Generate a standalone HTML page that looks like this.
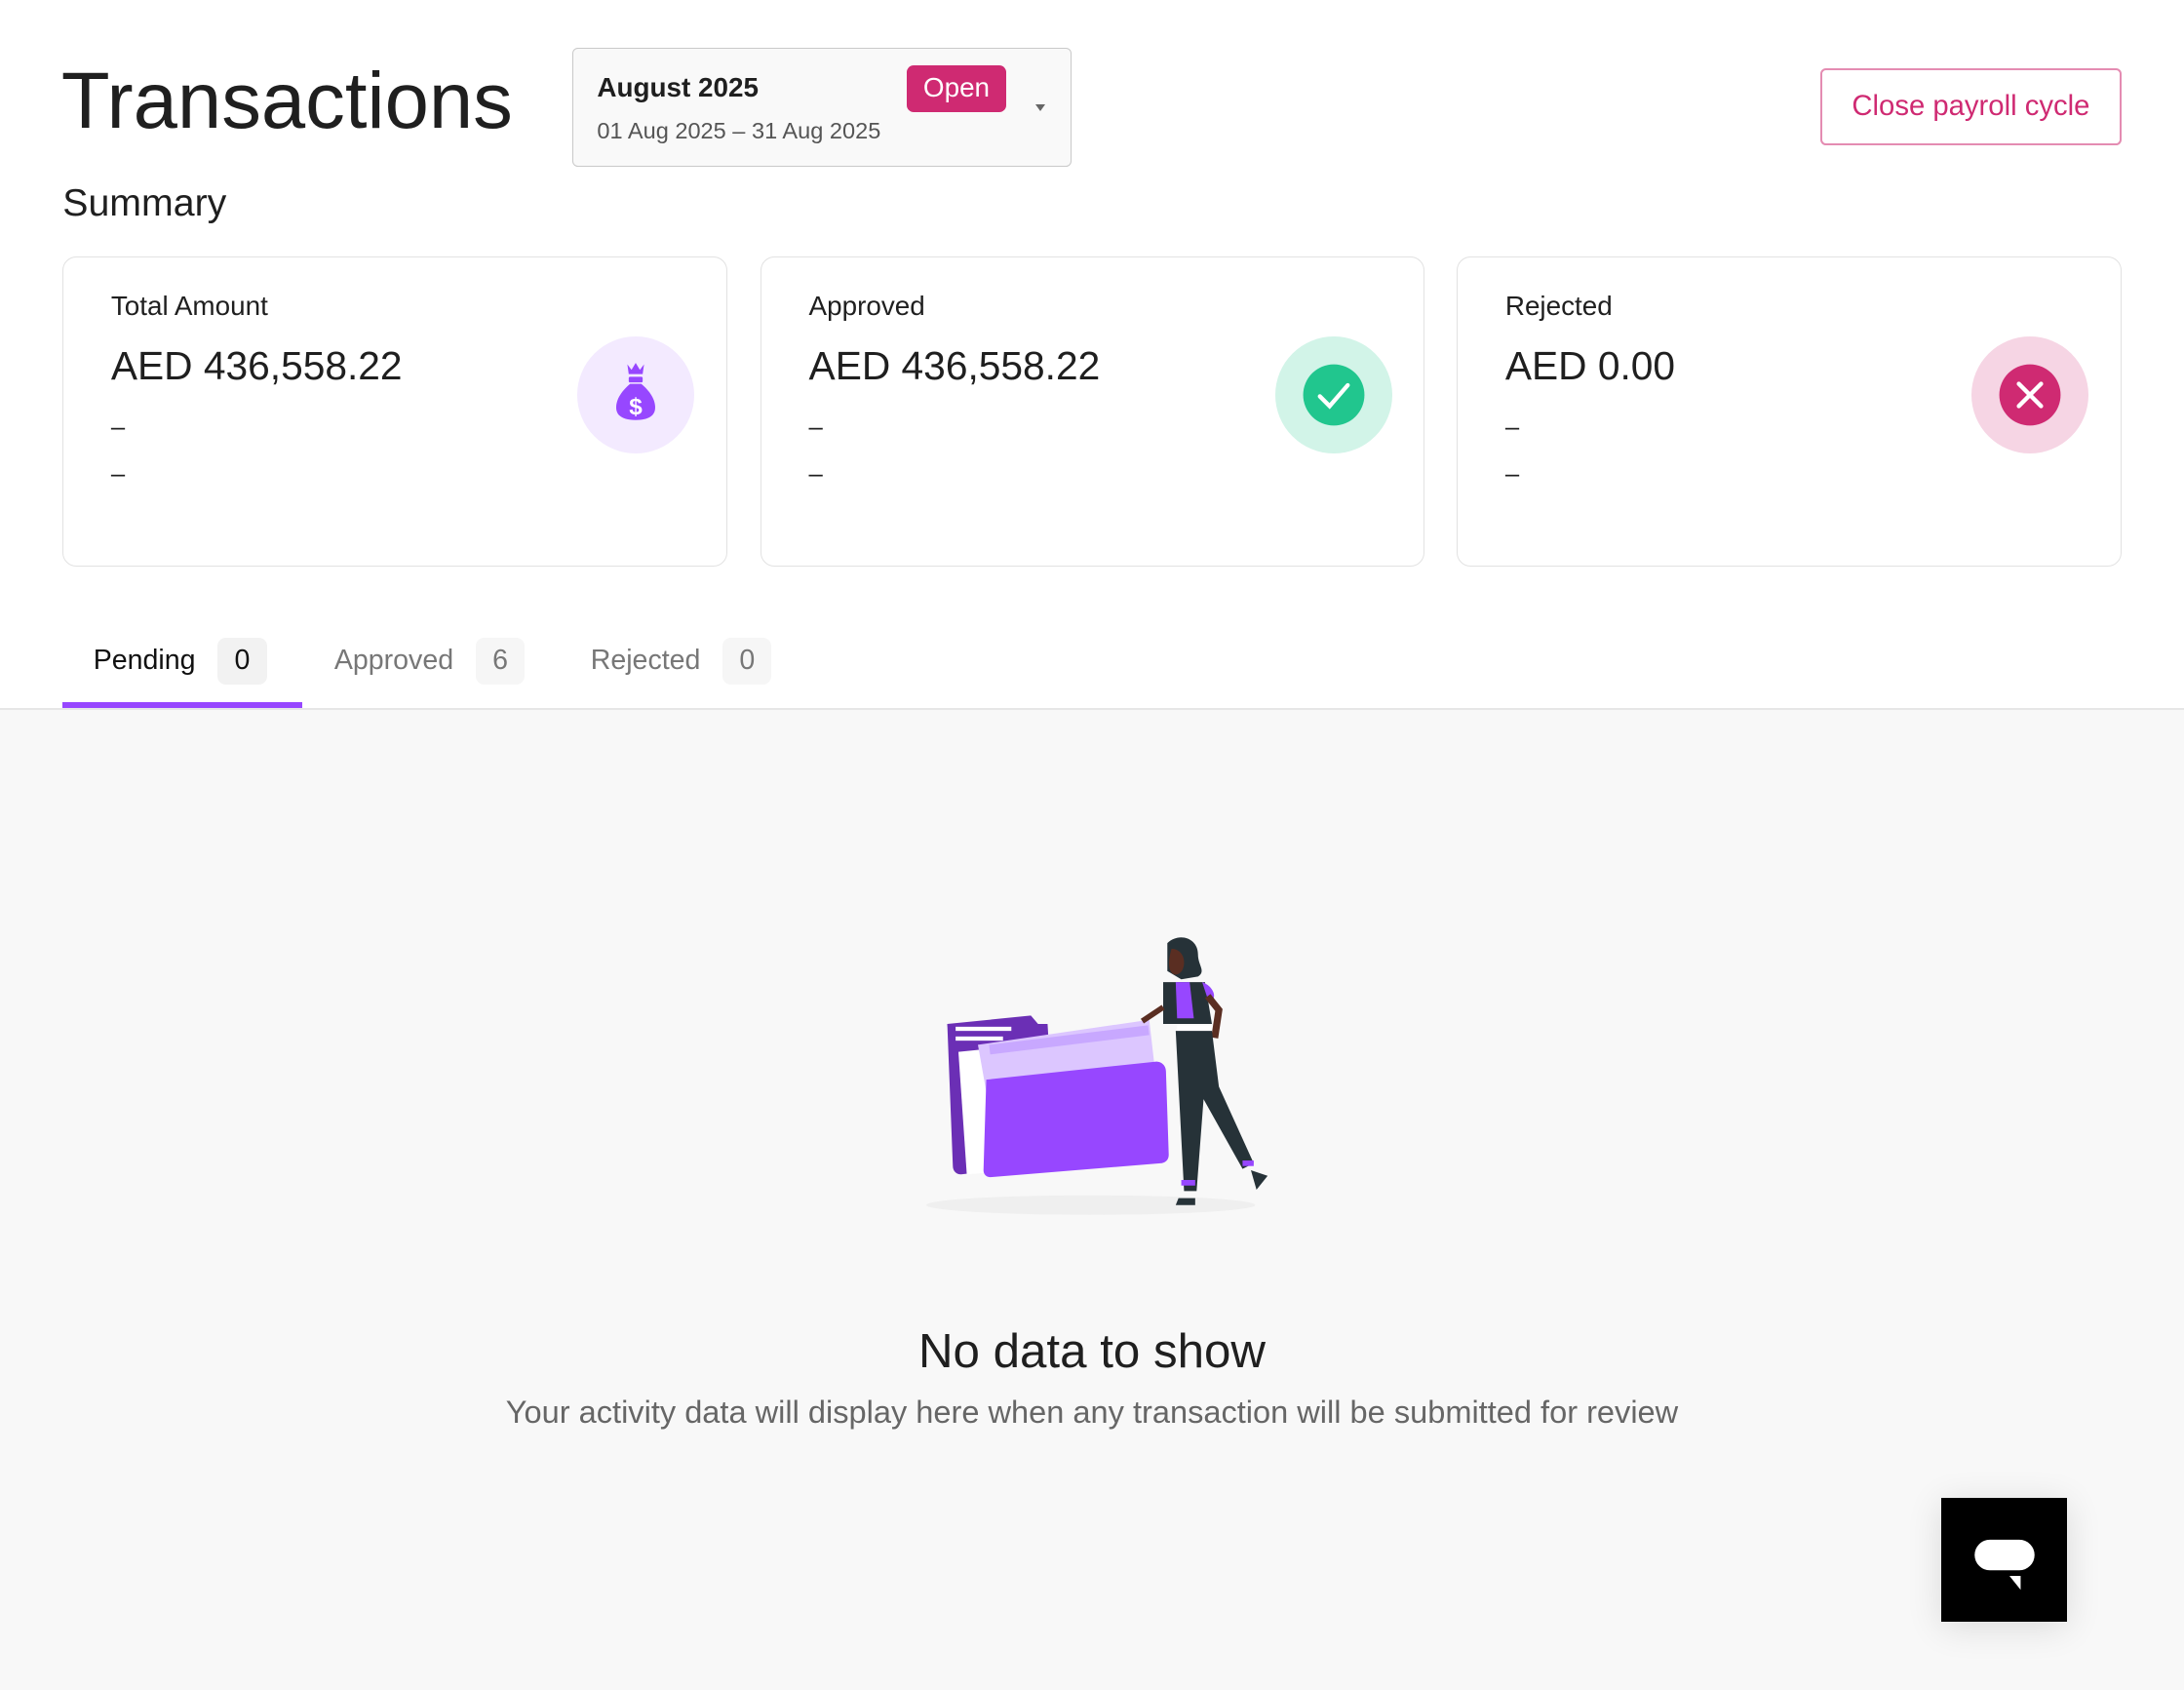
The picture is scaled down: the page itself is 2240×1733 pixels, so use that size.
<!DOCTYPE html>
<html><head><meta charset="utf-8">
<style>
html,body{margin:0;padding:0;}
body{width:2240px;height:1732px;overflow:hidden;background:#fff;font-family:"Liberation Sans",sans-serif;}
#w{zoom:1.428571;width:1568px;height:1212px;position:relative;color:#1f1f1f;}
.a{position:absolute;white-space:nowrap;}
.card{position:absolute;top:184px;width:477px;height:223px;border:1px solid #e2e2e2;border-radius:10px;box-sizing:border-box;background:#fff;}
.card .l{position:absolute;left:34px;top:24px;font-size:19.5px;}
.card .v{position:absolute;left:34px;top:62px;font-size:28.5px;}
.card .d{position:absolute;left:34px;font-size:18px;}
.card .ic{position:absolute;left:369px;top:57px;width:84px;height:84px;border-radius:50%;}
.tab{position:absolute;top:458px;font-size:20px;}
.badge{display:inline-block;background:#f2f2f2;border-radius:6px;padding:5px 12px;margin-left:16px;}
</style></head><body><div id="w">
<div class="a" style="left:44px;top:40px;font-size:57px;">Transactions</div>
<div class="a" style="left:411px;top:34px;width:358px;height:86px;box-sizing:border-box;border:1px solid #c9c9c9;border-radius:4px;background:#f9f9f9;">
 <div class="a" style="left:17px;top:17px;font-size:19.5px;font-weight:bold;">August 2025</div>
 <div class="a" style="left:239px;top:12px;width:72px;height:34px;background:#cf2a72;border-radius:5px;color:#fff;font-size:19.5px;text-align:center;line-height:32px;">Open</div>
 <div class="a" style="left:17px;top:50px;font-size:16.5px;color:#555;">01 Aug 2025 – 31 Aug 2025</div>
 <div class="a" style="left:332px;top:40px;width:0;height:0;border-left:4px solid transparent;border-right:4px solid transparent;border-top:5px solid #666;"></div>
</div>
<div class="a" style="left:1307px;top:49px;width:216px;height:55px;box-sizing:border-box;border:1.5px solid #e48cb2;border-radius:4px;color:#cf2a72;font-size:20.5px;text-align:center;line-height:52px;">Close payroll cycle</div>
<div class="a" style="left:45px;top:130px;font-size:27.5px;">Summary</div>

<div class="card" style="left:45px;"><div class="l">Total Amount</div><div class="v">AED 436,558.22</div><div class="d" style="top:112px">–</div><div class="d" style="top:146px">–</div>
<div class="ic" style="background:#f3eaff;"><svg width="84" height="84" viewBox="0 0 84 84"><path d="M36 20l3 4 3-5 3 5 3-4-1 7h-10z" fill="#9747ff"/><rect x="37" y="29" width="10" height="4" rx="1" fill="#9747ff"/><path d="M38 34h8c6 5 10 11 10 17 0 6-5 9-14 9s-14-3-14-9c0-6 4-12 10-17z" fill="#9747ff"/><text x="42" y="56" font-size="17" font-weight="bold" fill="#fff" text-anchor="middle" font-family="Liberation Sans">$</text></svg></div></div>
<div class="card" style="left:546px;"><div class="l">Approved</div><div class="v">AED 436,558.22</div><div class="d" style="top:112px">–</div><div class="d" style="top:146px">–</div>
<div class="ic" style="background:#d2f4e8;"><svg width="84" height="84"><circle cx="42" cy="42" r="22" fill="#21c68e"/><path d="M32 43l7 7 13-15" stroke="#fff" stroke-width="3" fill="none" stroke-linecap="round"/></svg></div></div>
<div class="card" style="left:1046px;"><div class="l">Rejected</div><div class="v">AED 0.00</div><div class="d" style="top:112px">–</div><div class="d" style="top:146px">–</div>
<div class="ic" style="background:#f6d5e4;"><svg width="84" height="84"><circle cx="42" cy="42" r="22" fill="#cf2a72"/><path d="M34 34l16 16M50 34l-16 16" stroke="#fff" stroke-width="3" stroke-linecap="round"/></svg></div></div>

<div class="tab" style="left:67px;color:#111;">Pending<span class="badge">0</span></div>
<div class="tab" style="left:240px;color:#777;">Approved<span class="badge" style="background:#f6f6f6">6</span></div>
<div class="tab" style="left:424px;color:#777;">Rejected<span class="badge" style="background:#f6f6f6">0</span></div>
<div class="a" style="left:45px;top:504px;width:172px;height:4px;background:#9747ff;"></div>
<div class="a" style="left:0;top:508px;width:1568px;height:704px;background:#f8f8f8;border-top:2px solid #e6e6e6;"></div>

<svg class="a" style="left:660px;top:665px;" width="260" height="215" viewBox="0 0 260 215">
<ellipse cx="123" cy="200" rx="118" ry="7" fill="#efefef"/>
<path d="M20 70l60-6 12 14-70 8z" fill="#6b2fb5"/>
<path d="M20 70h72l6 100-68 8c-4 0-6-3-6-6z" fill="#6b2fb5"/>
<rect x="26" y="72" width="40" height="3" fill="#fff"/><rect x="26" y="79" width="34" height="3" fill="#fff"/>
<path d="M28 90l20-2 10 88-24 2z" fill="#fff"/>
<path d="M42 85l123-18 8 70-120 10z" fill="#dcc6ff"/>
<rect x="50" y="85" width="115" height="7" fill="#c8a8ff" transform="rotate(-7 50 85)"/>
<path d="M48 110l122-13c4 0 7 3 7 7l2 60c0 4-3 6-6 6l-122 10c-3 0-5-2-5-5z" fill="#9747ff"/>
<path d="M178 12c8-8 22-4 22 8 0 8 6 12 0 16l-12 2-10-6z" fill="#263238"/>
<path d="M181 16c5 0 9 4 9 10s-4 10-8 8c-3-2-4-8-1-18z" fill="#5a2e22"/>
<path d="M175 40h30l5 30h-35z" fill="#263238"/><path d="M184 40h10l3 26h-12z" fill="#9747ff"/>
<path d="M203 40c6 2 10 8 8 12l-4 0z" fill="#9747ff"/>
<path d="M207 50l8 10-3 20" stroke="#5a2e22" stroke-width="5" fill="none"/>
<path d="M175 58l-15 10" stroke="#5a2e22" stroke-width="4"/>
<rect x="185" y="71" width="25" height="4" fill="#fff"/>
<path d="M184 75h26l5 40 25 55-8 4-28-50-5 66h-9z" fill="#263238"/>
<rect x="188" y="182" width="10" height="4" fill="#9747ff"/><rect x="232" y="168" width="8" height="4" fill="#9747ff"/>
<path d="M186 195h12v5h-14z" fill="#263238"/><path d="M238 175l12 4-8 10z" fill="#263238"/>
</svg>

<div class="a" style="left:0;width:1568px;top:950px;text-align:center;font-size:34.5px;color:#1f1f1f;">No data to show</div>
<div class="a" style="left:0;width:1568px;top:1001px;text-align:center;font-size:22.8px;color:#666;">Your activity data will display here when any transaction will be submitted for review</div>

<div class="a" style="left:1394px;top:1075px;width:90px;height:89px;background:#000;box-shadow:0 4px 24px rgba(0,0,0,0.12);">
<svg width="90" height="89"><rect x="24" y="30" width="43" height="22" rx="11" fill="#fff"/><path d="M49 56h8v10z" fill="#fff"/></svg></div>
</div></body></html>
